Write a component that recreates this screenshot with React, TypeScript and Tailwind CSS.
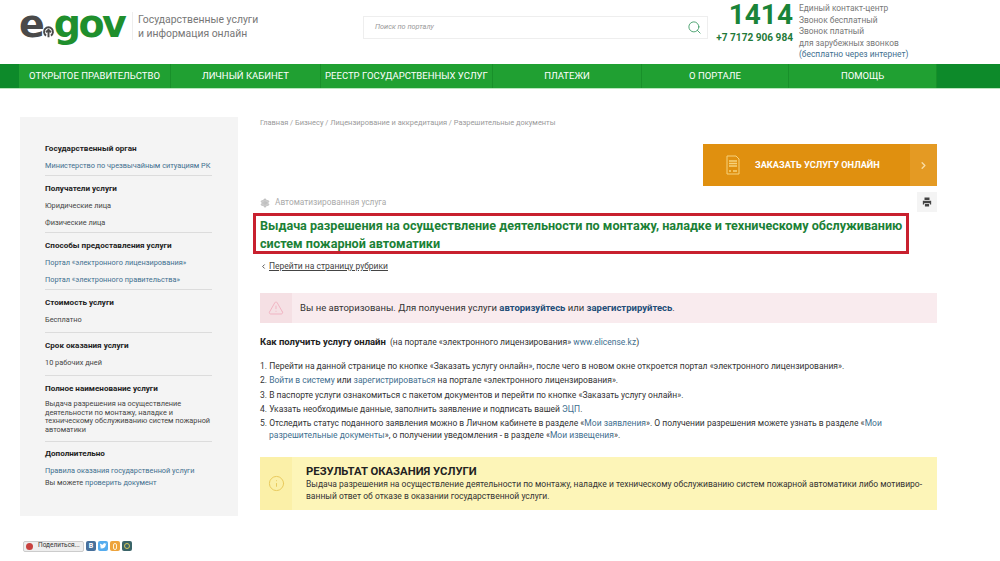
import { ChevronLeft, ChevronRight, Search, Settings, TriangleAlert, Info } from "lucide-react";

const navItems = [
  { label: "ОТКРЫТОЕ ПРАВИТЕЛЬСТВО", width: "w-[152px]" },
  { label: "ЛИЧНЫЙ КАБИНЕТ", width: "w-[150px]" },
  { label: "РЕЕСТР ГОСУДАРСТВЕННЫХ УСЛУГ", width: "w-[172px]" },
  { label: "ПЛАТЕЖИ", width: "w-[149px]" },
  { label: "О ПОРТАЛЕ", width: "w-[147px]" },
  { label: "ПОМОЩЬ", width: "w-[148px]" },
];

function Link({ children }: { children: React.ReactNode }) {
  return <span className="text-[#3f6f8f]">{children}</span>;
}

function SideTitle({ children }: { children: React.ReactNode }) {
  return <div className="h-[13px] leading-[12px] text-[8.1px] font-bold text-[#222]">{children}</div>;
}

function SideRow({ children }: { children: React.ReactNode }) {
  return <div className="mt-[5px] h-[12px] leading-[12px] text-[#444]">{children}</div>;
}

function Sidebar() {
  return (
    <aside className="w-[218px] h-[399px] bg-[#f4f4f4] pl-[25px] pr-[26px] pt-[25px] text-[7.35px] shrink-0 whitespace-nowrap">
      <div className="h-[34px] border-b border-[#dcdcdc]">
        <SideTitle>Государственный орган</SideTitle>
        <SideRow><Link>Министерство по чрезвычайным ситуациям РК</Link></SideRow>
      </div>
      <div className="mt-[6px] h-[51px] border-b border-[#dcdcdc]">
        <SideTitle>Получатели услуги</SideTitle>
        <SideRow>Юридические лица</SideRow>
        <SideRow>Физические лица</SideRow>
      </div>
      <div className="mt-[6px] h-[51px] border-b border-[#dcdcdc]">
        <SideTitle>Способы предоставления услуги</SideTitle>
        <SideRow><Link>Портал «электронного лицензирования»</Link></SideRow>
        <SideRow><Link>Портал «электронного правительства»</Link></SideRow>
      </div>
      <div className="mt-[6px] h-[37px] border-b border-[#dcdcdc]">
        <SideTitle>Стоимость услуги</SideTitle>
        <SideRow>Бесплатно</SideRow>
      </div>
      <div className="mt-[6px] h-[37px] border-b border-[#dcdcdc]">
        <SideTitle>Срок оказания услуги</SideTitle>
        <SideRow>10 рабочих дней</SideRow>
      </div>
      <div className="mt-[6px] h-[60px] border-b border-[#dcdcdc]">
        <SideTitle>Полное наименование услуги</SideTitle>
        <div className="mt-[5px] leading-[8.7px] text-[#444]">
          Выдача разрешения на осуществление<br />деятельности по монтажу, наладке и<br />техническому обслуживанию систем пожарной<br />автоматики
        </div>
      </div>
      <div className="mt-[5px]">
        <SideTitle>Дополнительно</SideTitle>
        <SideRow><Link>Правила оказания государственной услуги</Link></SideRow>
        <div className="h-[12px] leading-[12px] text-[#444]">Вы можете <Link>проверить документ</Link></div>
      </div>
    </aside>
  );
}

function Header() {
  return (
    <header className="h-[64px] flex">
      <div className="w-[132px] pl-[19px] flex items-center h-[48px] font-['DejaVu_Sans'] font-bold leading-none">
        <span className="text-[#4a4a4a] text-[38px] tracking-[-2px]">e</span>
        <svg viewBox="0 0 16 16" className="w-[13px] h-[13px] mt-[14px] mx-[-1px] shrink-0" fill="none" stroke="#4a4a4a" strokeWidth="2.4">
          <path d="M5 13 A5.5 5.5 0 1 1 11 13" />
          <path d="M8 15 V7 M5 9 L8 6 L11 9" />
        </svg>
        <span className="text-[#1f8f2d] text-[38px] tracking-[-2.5px]">gov</span>
      </div>
      <div className="mt-[12px] h-[28px] w-[231px] border-l border-[#eeeeee] pl-[5px] pt-[1px] text-[10.4px] leading-[14px] text-[#777]">
        Государственные услуги<br />и информация онлайн
      </div>
      <div className="mt-[16px] w-[345px] h-[23px] border border-[#eeeeee] flex items-center justify-between pl-[11px] pr-[5px]">
        <span className="italic text-[7.3px] text-[#999]">Поиск по порталу</span>
        <Search className="w-[15px] h-[15px] text-[#3c9a63]" strokeWidth={1.4} />
      </div>
      <div className="ml-[8px] w-[77px] flex flex-col items-end pt-[1px]">
        <div className="text-[28px] leading-[28px] font-bold text-[#1a8438]">1414</div>
        <div className="mt-[2px] text-[10.1px] leading-[14px] font-bold text-[#1f7a3a] whitespace-nowrap">+7 7172 906 984</div>
      </div>
      <div className="ml-[6px] pt-[3px] text-[8.4px] leading-[11.6px] text-[#777] whitespace-nowrap">
        Единый контакт-центр<br />Звонок бесплатный<br />Звонок платный<br />для зарубежных звонков<br />
        <span className="text-[#3f6f8f]">(бесплатно через интернет)</span>
      </div>
    </header>
  );
}

function Nav() {
  return (
    <nav className="h-[25px] bg-[#0d8a2a] flex pl-[19px] border-b border-[#b9e6bd]">
      {navItems.map((item) => (
        <div
          key={item.label}
          className={`${item.width} bg-[#20a032] border-r border-[#18902a] flex items-center justify-center text-white text-[9.5px] whitespace-nowrap`}
        >
          {item.label}
        </div>
      ))}
    </nav>
  );
}

function Main() {
  return (
    <main className="ml-[22px] w-[677px] text-[8.5px] text-[#333]">
      <div className="h-[11px] pt-[1px] leading-[10px] text-[7.45px] text-[#9a9a9a]">
        Главная / Бизнесу / Лицензирование и аккредитация / Разрешительные документы
      </div>
      <div className="mt-[16px] flex justify-end">
        <div className="w-[234px] h-[42px] bg-[#e0900f] flex text-white">
          <div className="w-[207px] flex items-center pl-[23px]">
            <svg viewBox="0 0 14 20" className="w-[14px] h-[20px]" fill="none" stroke="#f6d27c" strokeWidth="1">
              <path d="M1 1 H10 L13 4 V19 H1 Z" />
              <path d="M3 6 H11 M3 8.5 H11 M3 11 H11 M3 16 H5 M7 16 H11" strokeWidth="1.4" />
            </svg>
            <span className="ml-[15px] text-[9.2px] font-bold whitespace-nowrap">ЗАКАЗАТЬ УСЛУГУ ОНЛАЙН</span>
          </div>
          <div className="w-[27px] bg-[#e49a23] flex items-center justify-center">
            <ChevronRight className="w-[11px] h-[11px] text-[#f9dca3]" strokeWidth={3} />
          </div>
        </div>
      </div>
      <div className="mt-[6px] h-[21px] flex justify-between">
        <div className="mt-[5px] flex items-center h-[11px] text-[8.3px] text-[#aaa]">
          <Settings className="w-[10px] h-[10px] text-[#bbb] fill-[#ccc]" />
          <span className="ml-[5px]">Автоматизированная услуга</span>
        </div>
        <div className="w-[20px] h-[20px] bg-[#f4f4f4] flex items-center justify-center">
          <svg viewBox="0 0 12 12" className="w-[10px] h-[10px]" fill="#444">
            <path d="M3 0.5 H9 V3.5 H3 Z M1 4.5 H11 V9 H9.5 V7.5 H2.5 V9 H1 Z M3.5 8.5 H8.5 V11.5 H3.5 Z" />
          </svg>
        </div>
      </div>
      <div className="ml-[-7px] w-[656px] h-[41px] border-[3px] border-[#c8202f] pl-[4px] pt-[1px] text-[12.6px] leading-[18px] font-bold text-[#1b8136] whitespace-nowrap">
        Выдача разрешения на осуществление деятельности по монтажу, наладке и техническому обслуживанию<br />систем пожарной автоматики
      </div>
      <div className="mt-[6px] flex items-center h-[12px] text-[#444]">
        <ChevronLeft className="w-[7px] h-[7px]" strokeWidth={3} />
        <span className="ml-[2px] underline">Перейти на страницу рубрики</span>
      </div>
      <div className="mt-[21px] h-[30px] bg-[#f9ebee] flex items-center text-[9.5px]">
        <div className="w-[32px] h-full bg-[#f5e0e4] flex items-center justify-center shrink-0">
          <TriangleAlert className="w-[16px] h-[16px] text-[#f0aebd]" strokeWidth={1.3} />
        </div>
        <span className="ml-[8px]">
          Вы не авторизованы. Для получения услуги <b className="text-[#234e78]">авторизуйтесь</b> или <b className="text-[#234e78]">зарегистрируйтесь</b>.
        </span>
      </div>
      <div className="mt-[13px] h-[12px] leading-[12px] whitespace-nowrap">
        <b className="text-[9.5px] text-[#222]">Как получить услугу онлайн</b>
        <span className="ml-[4px]">(на портале «электронного лицензирования» <Link>www.elicense.kz</Link>)</span>
      </div>
      <div className="mt-[11px] leading-[14.3px] whitespace-nowrap">
        <div>1. Перейти на данной странице по кнопке «Заказать услугу онлайн», после чего в новом окне откроется портал «электронного лицензирования».</div>
        <div>2. <Link>Войти в систему</Link> или <Link>зарегистрироваться</Link> на портале «электронного лицензирования».</div>
        <div>3. В паспорте услуги ознакомиться с пакетом документов и перейти по кнопке «Заказать услугу онлайн».</div>
        <div>4. Указать необходимые данные, заполнить заявление и подписать вашей <Link>ЭЦП</Link>.</div>
        <div className="pl-[9px] -indent-[9px] leading-[12px] mt-[1px]">
          5. Отследить статус поданного заявления можно в Личном кабинете в разделе «<Link>Мои заявления</Link>». О получении разрешения можете узнать в разделе «<Link>Мои</Link><br /><Link>разрешительные документы</Link>», о получении уведомления - в разделе  «<Link>Мои извещения</Link>».
        </div>
      </div>
      <div className="mt-[16px] h-[53px] bg-[#fdf5b8] flex">
        <div className="w-[32px] bg-[#fbf0a8] flex items-center justify-center shrink-0">
          <Info className="w-[17px] h-[17px] text-[#e8c95c]" strokeWidth={1.4} />
        </div>
        <div className="ml-[14px] pt-[9px] whitespace-nowrap">
          <div className="text-[11.3px] leading-[12px] font-bold text-[#222]">РЕЗУЛЬТАТ ОКАЗАНИЯ УСЛУГИ</div>
          <div className="mt-[1px] leading-[11.5px]">
            Выдача разрешения на осуществление деятельности по монтажу, наладке и техническому обслуживанию систем пожарной автоматики либо мотивиро-<br />ванный ответ об отказе в оказании государственной услуги.
          </div>
        </div>
      </div>
    </main>
  );
}

function Share() {
  return (
    <div className="mt-[24px] ml-[23px] flex items-center h-[12px]">
      <div className="w-[61px] h-[11px] rounded-[2px] border border-[#ccc] bg-[#eeeeee] flex items-center text-[6.5px] text-[#333]">
        <span className="ml-[2px] w-[7px] h-[7px] rounded-full bg-[#c8423f]" />
        <span className="ml-[5px]">Поделиться...</span>
      </div>
      <span className="ml-[2px] w-[10px] h-[10px] rounded-[2px] bg-[#47709c] text-white text-[7px] leading-[10px] text-center font-bold">В</span>
      <span className="ml-[2px] w-[10px] h-[10px] rounded-[2px] bg-[#55acee] flex items-center justify-center">
        <svg viewBox="0 0 10 10" className="w-[8px] h-[8px]" fill="white">
          <path d="M1 7.5 C4 9 8.5 7.5 8.5 3 L9.5 2 L8 2.2 C7 1 5 1.7 5 3.5 C3.5 3.5 2.3 2.8 1.5 2 C1 3 1.3 4.2 2.2 4.8 L1.4 4.6 C1.4 5.6 2 6.2 2.9 6.4 C2.5 7 1.8 7.3 1 7.5 Z" />
        </svg>
      </span>
      <span className="ml-[2px] w-[10px] h-[10px] rounded-[2px] bg-[#eda33c] flex items-center justify-center">
        <span className="w-[4px] h-[7px] rounded-[2px] border border-[#fff3d8]" />
      </span>
      <span className="ml-[2px] w-[10px] h-[10px] rounded-[2px] bg-[#3a6468] flex items-center justify-center">
        <span className="w-[6px] h-[6px] rounded-full border border-[#d7c95c]" />
      </span>
    </div>
  );
}

export default function App() {
  return (
    <div className="w-[1000px] h-[561px] overflow-hidden bg-white font-['Roboto',sans-serif]">
      <Header />
      <Nav />
      <div className="mt-[28px] pl-[20px] flex">
        <Sidebar />
        <Main />
      </div>
      <Share />
    </div>
  );
}
